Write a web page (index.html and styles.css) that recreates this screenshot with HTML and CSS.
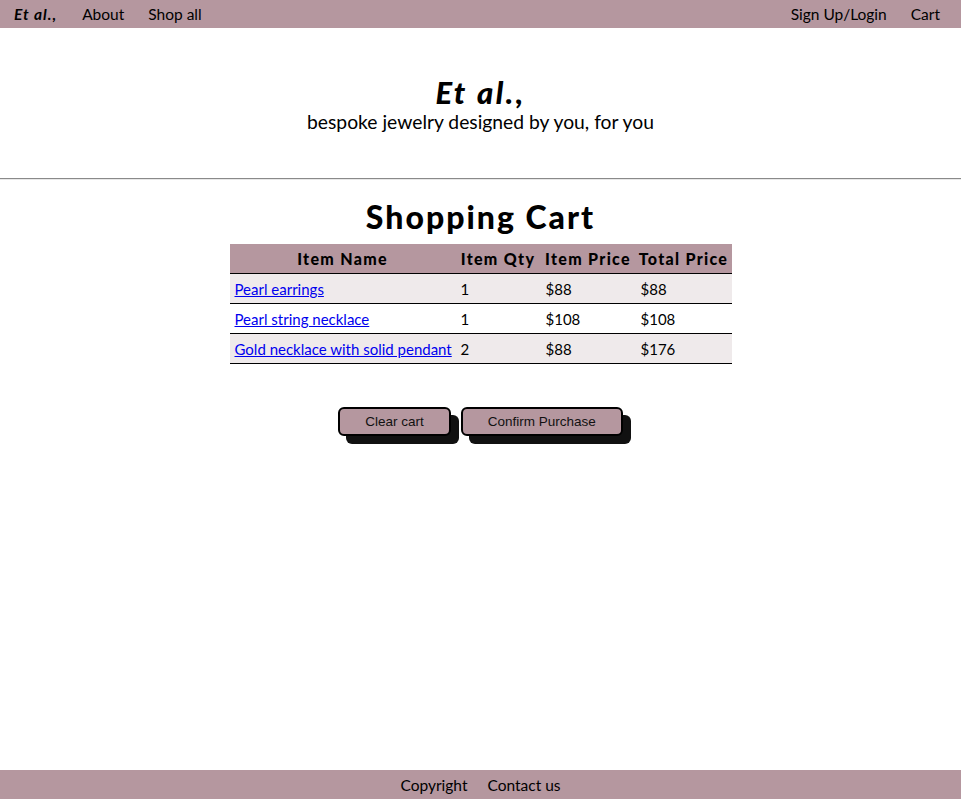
FILE: index.html
```html
<!DOCTYPE html>
<html lang="en">
<head>
<meta charset="utf-8">
<title>Et al., — Shopping Cart</title>
<link rel="stylesheet" href="styles.css">
</head>
<body>
<nav class="topnav">
  <div class="nav-left">
    <a class="nav-link brand" href="#">Et al.,</a>
    <a class="nav-link" href="#">About</a>
    <a class="nav-link" href="#">Shop all</a>
  </div>
  <div class="nav-right">
    <a class="nav-link" href="#">Sign Up/Login</a>
    <a class="nav-link" href="#">Cart</a>
  </div>
</nav>
<header class="hero">
  <h1 class="hero-title">Et al.,</h1>
  <p class="hero-sub">bespoke jewelry designed by you, for you</p>
</header>
<hr class="divider">
<main class="cart">
  <h2 class="cart-title">Shopping Cart</h2>
  <table class="cart-table">
    <colgroup>
      <col class="c-name"><col class="c-qty"><col class="c-price"><col class="c-total">
    </colgroup>
    <thead>
      <tr><th>Item Name</th><th>Item Qty</th><th>Item Price</th><th>Total Price</th></tr>
    </thead>
    <tbody>
      <tr><td><a href="#">Pearl earrings</a></td><td>1</td><td>$88</td><td>$88</td></tr>
      <tr><td><a href="#">Pearl string necklace</a></td><td>1</td><td>$108</td><td>$108</td></tr>
      <tr><td><a href="#">Gold necklace with solid pendant</a></td><td>2</td><td>$88</td><td>$176</td></tr>
    </tbody>
  </table>
  <div class="actions">
    <button class="btn btn-clear">Clear cart</button>
    <button class="btn btn-confirm">Confirm Purchase</button>
  </div>
</main>
<footer class="footer">
  <a class="foot-link" href="#">Copyright</a>
  <a class="foot-link" href="#">Contact us</a>
</footer>
</body>
</html>
```
FILE: styles.css
```css
html, body {
  margin: 0;
  padding: 0;
}
body {
  font-family: "Gill Sans", Lato, "Open Sans", sans-serif;
  color: #000;
  min-height: 100vh;
  display: flex;
  flex-direction: column;
  background: #fff;
}
.topnav {
  height: 28px;
  background: #b5979f;
  display: flex;
  justify-content: space-between;
  align-items: center;
  padding: 0 9px 0 2px;
}
.nav-left, .nav-right {
  display: flex;
  align-items: center;
}
.nav-link {
  color: #000;
  text-decoration: none;
  font-size: 15.5px;
  padding: 0 12px;
}
.brand {
  font-weight: bold;
  font-style: italic;
  letter-spacing: 1px;
  padding-right: 13px;
}
.hero {
  text-align: center;
  padding: 46px 0 44px;
}
.hero-title {
  margin: 0;
  font-size: 31px;
  font-weight: 900;
  font-style: italic;
  letter-spacing: 2.5px;
  line-height: 36px;
}
.hero-sub {
  margin: 0;
  font-size: 19.3px;
  line-height: 24px;
}
.divider {
  margin: 0;
  border: none;
  border-top: 1px solid #8a8a8a;
  border-bottom: 1px solid #e8e8e8;
  height: 0;
}
.cart {
  flex: 1;
  display: flex;
  flex-direction: column;
  align-items: center;
}
.cart-title {
  margin: 18px 0 8px;
  font-size: 32px;
  font-weight: 900;
  letter-spacing: 2px;
  line-height: 38px;
}
.cart-table {
  border-collapse: collapse;
  width: 502px;
  table-layout: fixed;
  font-size: 15px;
}
.c-name { width: 226px; }
.c-qty { width: 85px; }
.c-price { width: 95px; }
.c-total { width: 96px; }
.cart-table th {
  background: #b5979f;
  font-weight: 900;
  font-size: 16px;
  letter-spacing: 1.3px;
  height: 29px;
  padding: 0 2px;
  white-space: nowrap;
  border-bottom: 1px solid #000;
}
.cart-table td {
  height: 29px;
  padding: 0 5px;
  text-align: left;
  white-space: nowrap;
  border-bottom: 1px solid #000;
}
.cart-table tbody tr:nth-child(odd) {
  background: #efeaeb;
}
.cart-table a {
  color: #0000ee;
  text-decoration: underline;
}
.actions {
  display: flex;
  gap: 10px;
  margin-top: 43px;
}
.btn {
  font-family: "Liberation Sans", Arial, sans-serif;
  font-size: 13.5px;
  background: #b5979f;
  color: #111;
  border: 2px solid #000;
  border-radius: 6px;
  height: 29px;
  padding: 0 25px;
  box-shadow: 8px 8px 0 #111;
}
.footer {
  height: 29px;
  background: #b5979f;
  display: flex;
  justify-content: center;
  align-items: center;
  gap: 20px;
}
.foot-link {
  color: #000;
  text-decoration: none;
  font-size: 15.5px;
}
```
